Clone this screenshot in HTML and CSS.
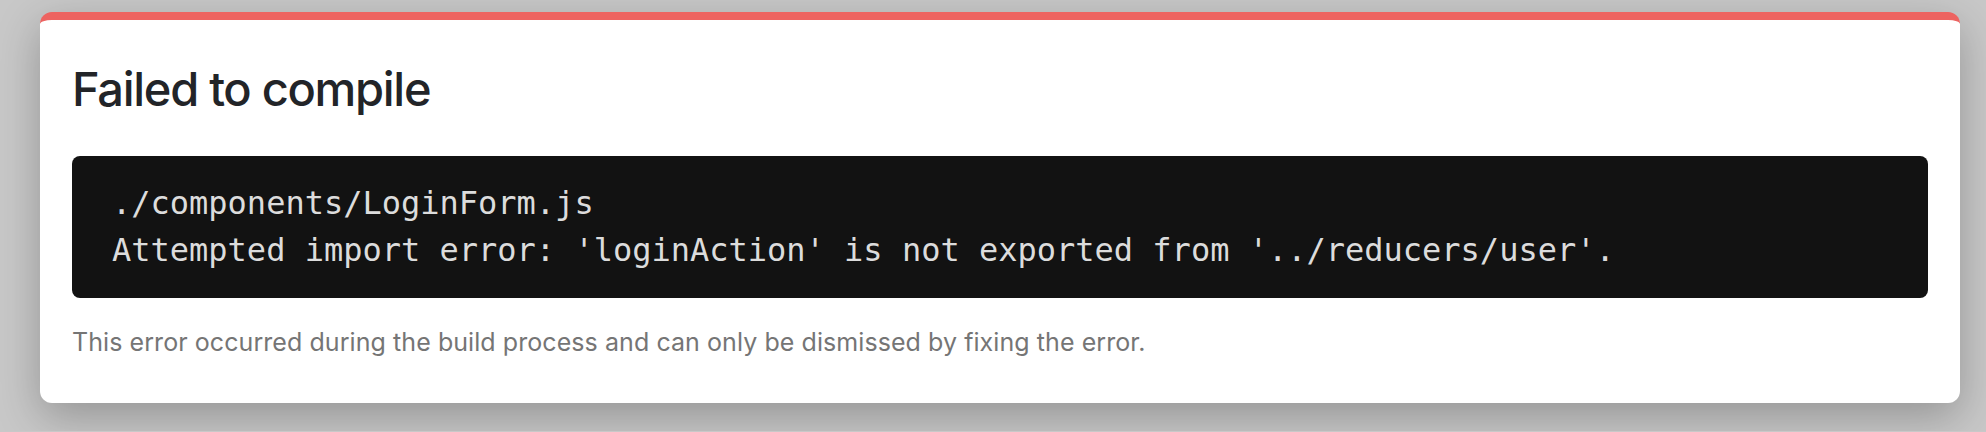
FILE: index.html
```html
<!DOCTYPE html>
<html lang="en">
<head>
  <meta charset="UTF-8">
  <meta name="viewport" content="width=device-width, initial-scale=1.0">
  <title>Failed to compile</title>
  <link rel="stylesheet" href="styles.css">
</head>
<body>
  <div class="error-overlay">
    <h1 class="error-title">Failed to compile</h1>
    <pre class="error-code">./components/LoginForm.js
Attempted import error: 'loginAction' is not exported from '../reducers/user'.</pre>
    <p class="error-footer">This error occurred during the build process and can only be dismissed by fixing the error.</p>
  </div>
</body>
</html>
```

FILE: styles.css
```css
body {
  margin: 0;
  padding: 12px 26px 28px 40px;
  background-color: #c8c8c8;
  font-family: Inter, "Noto Sans", sans-serif;
}

/* Overlay card */
.error-overlay {
  background-color: #fff;
  border-top: 8px solid #ed6360;
  border-radius: 12px;
  padding: 41px 32px 46px 32px;
  box-shadow: 0 14px 44px rgba(0, 0, 0, 0.26);
}

.error-title {
  margin: 0;
  font-size: 47px;
  line-height: 56px;
  font-weight: 500;
  letter-spacing: -1.3px;
  color: #222428;
}

.error-code {
  margin: 39px 0 0 0;
  padding: 24px 40px;
  background-color: #121212;
  color: #dcdcdc;
  border-radius: 8px;
  font-family: "DejaVu Sans Mono", monospace;
  font-size: 32px;
  line-height: 47px;
}

.error-footer {
  margin: 29px 0 0 0;
  font-size: 25px;
  line-height: 30px;
  letter-spacing: 0.07px;
  color: #757575;
}
```
